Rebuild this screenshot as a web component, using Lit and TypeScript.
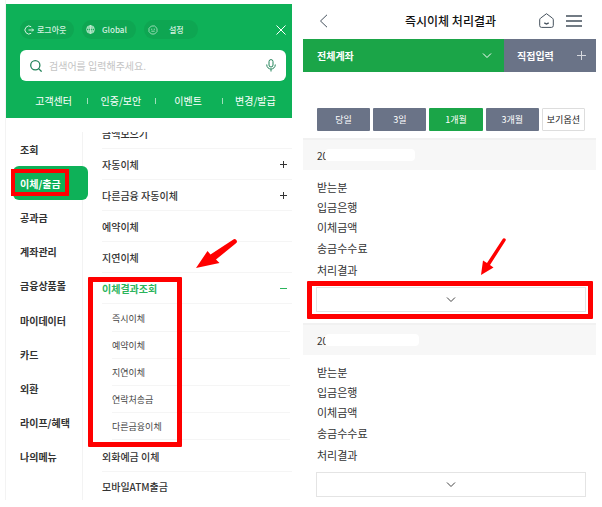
import { LitElement, html, svg, css } from "lit";
import { customElement, state } from "lit/decorators.js";
import { classMap } from "lit/directives/class-map.js";

const reset = css`
  * { box-sizing: border-box; }
  ul { list-style: none; margin: 0; padding: 0; }
  button, input, select { font: inherit; color: inherit; margin: 0; padding: 0; border: 0; background: none; }
  button { cursor: pointer; }
  a { color: inherit; text-decoration: none; }
  svg { display: block; fill: none; flex: none; }
`;

const chevron = svg`<path d="M1 1.5l4 4 4-4" stroke="currentColor"/>`;

@customElement("menu-panel")
class MenuPanel extends LitElement {
  @state() private section = "이체/출금";

  private sections = ["조회", "이체/출금", "공과금", "계좌관리", "금융상품몰", "마이데이터", "카드", "외환", "라이프/혜택", "나의메뉴"];
  private results = ["즉시이체", "예약이체", "지연이체", "연락처송금", "다른금융이체"];

  static styles = [reset, css`
    :host { display: flex; flex-direction: column; padding-top: 4px; position: relative; border-left: 1px solid #f3f3f3; }
    .head { background: #0eb158; color: #fff; height: 114px; padding: 16px 6px 0 14px; }
    .tools { display: flex; align-items: center; gap: 8px; }
    .pill { display: flex; align-items: center; width: 54px; height: 19px; border-radius: 10px; background: #0ea652; font-size: 8px; font-weight: 500; color: #d5f1e0; padding: 0 0 0 4px; gap: 3px; }
    .pill.wide { gap: 7px; }
    .pill.wider { gap: 11px; }
    .close { margin-left: auto; }
    .search { display: flex; align-items: center; height: 31px; margin-top: 11px; padding: 0 10px; gap: 7px; border-radius: 6px; background: #fff; color: #23845a; }
    .search input { flex: 1; min-width: 0; font-size: 10px; outline: 0; color: #333; }
    .search input::placeholder { color: #c4c4c4; opacity: 1; }
    .links { display: grid; grid-template-columns: repeat(4, 1fr); margin: 12px -3px 0 0; }
    .links li { display: flex; align-items: center; justify-content: center; position: relative; font-size: 10px; line-height: 16px; }
    .links li + li::before { content: ""; position: absolute; left: 0; width: 1px; height: 6px; background: #9fe0bb; }
    .body { display: flex; padding-top: 14px; }
    .side { display: flex; flex-direction: column; width: 77px; flex: none; border-right: 1px solid #f3f3f3; padding-bottom: 26px; font-size: 10px; font-weight: 700; color: #333; }
    .side li { flex: 1; display: flex; position: relative; }
    .side a { flex: 1; display: flex; align-items: center; padding-left: 14px; white-space: nowrap; }
    .side .on a { margin: 0 -6px 0 7px; padding-left: 7px; border-radius: 6px; background: #0eb158; color: #fff; }
    .mark { position: absolute; pointer-events: none; border: 5px solid #f00; }
    .side .mark { border-width: 4px; inset: 3px 13px 4px 5px; }
    .list { flex: 1; overflow: hidden; padding-left: 19px; font-size: 10px; font-weight: 500; color: #333; }
    .list > ul { margin-top: -14px; }
    .row { display: flex; align-items: center; justify-content: space-between; height: 31px; padding-right: 5px; border-bottom: 1px solid #f5f5f5; }
    .list > ul > li:last-child .row { height: 28px; border-bottom: 0; }
    .group { position: relative; }
    .group .row { color: #2bb45c; font-weight: 700; }
    .group .mark { inset: 4px 110px -6px -14px; border-radius: 1px; }
    .sub { padding: 1px 2px 1px 10px; font-size: 9px; font-weight: 400; color: #444; }
    .sub a { display: flex; align-items: center; height: 27px; border-bottom: 1px solid #f5f5f5; }
    .arrow { position: absolute; left: 188px; top: 236px; fill: #f00; }
  `];

  private row(name: string, sign = "") {
    return html`<a class="row" href="#">${name}${sign
      ? html`<svg width="7" height="7" stroke="currentColor"><path d=${sign === "+" ? "M0 3.5h7M3.5 0v7" : "M0 3.5h7"}/></svg>`
      : ""}</a>`;
  }

  render() {
    return html`
      <header class="head">
        <div class="tools">
          <button class="pill"><svg width="10" height="10" stroke="currentColor"><path d="M7.2 1.7A4 4 0 1 0 7.2 8.3M4.5 5h5M8 3.5L9.5 5 8 6.5"/></svg>로그아웃</button>
          <button class="pill wide"><svg width="9" height="9" stroke="currentColor" stroke-width=".8"><circle cx="4.5" cy="4.5" r="3.9"/><ellipse cx="4.5" cy="4.5" rx="1.8" ry="3.9"/><path d="M1 3h7M1 6h7M4.5.6v7.8"/></svg>Global</button>
          <button class="pill wider"><svg width="10" height="10" stroke="currentColor" stroke-width=".7"><path d="M3.4 1h3.2L9 3.4v3.2L6.6 9H3.4L1 6.6V3.4Z"/><path d="M3 4.2h1.3M5.7 4.2h1.3M3.3 6.2h3.4"/></svg>설정</button>
          <button class="close" aria-label="닫기"><svg width="10" height="10" stroke="#fff"><path d="M.5.5l9 9M9.5.5l-9 9"/></svg></button>
        </div>
        <div class="search">
          <svg width="12" height="12" stroke="currentColor" stroke-width="1.3"><circle cx="5.3" cy="5.3" r="4.6"/><path d="M8.6 8.6l3 3"/></svg>
          <input type="search" aria-label="검색어" placeholder="검색어를 입력해주세요." />
          <button aria-label="음성 검색"><svg width="10" height="13" stroke="#23845a"><rect x="3" y=".6" width="4" height="7.4" rx="2"/><path d="M.7 5.5c0 6 8.6 6 8.6 0M5 10v2.5"/></svg></button>
        </div>
        <nav><ul class="links">${["고객센터", "인증/보안", "이벤트", "변경/발급"].map(t => html`<li><a href="#">${t}</a></li>`)}</ul></nav>
      </header>
      <div class="body">
        <ul class="side">${this.sections.map(t => html`
          <li class=${classMap({ on: t === this.section })}>
            <a href="#" @click=${() => (this.section = t)}>${t}</a>
            ${t === "이체/출금" ? html`<span class="mark"></span>` : ""}
          </li>`)}
        </ul>
        <div class="list"><ul>
          <li>${this.row("금액모으기")}</li>
          <li>${this.row("자동이체", "+")}</li>
          <li>${this.row("다른금융 자동이체", "+")}</li>
          <li>${this.row("예약이체")}</li>
          <li>${this.row("지연이체")}</li>
          <li class="group">
            ${this.row("이체결과조회", "-")}
            <ul class="sub">${this.results.map(t => html`<li><a href="#">${t}</a></li>`)}</ul>
            <span class="mark"></span>
          </li>
          <li>${this.row("외화예금 이체")}</li>
          <li>${this.row("모바일ATM출금")}</li>
        </ul></div>
      </div>
      <svg class="arrow" width="46" height="34"><path d="M2 32L13.5 15 16.5 18.5 39 3.7A2.3 2.3 0 0 1 42 7.3L22 23.5 25.5 27Z"/></svg>
    `;
  }
}

@customElement("result-panel")
class ResultPanel extends LitElement {
  @state() private period = "1개월";

  static styles = [reset, css`
    :host { display: flex; flex-direction: column; color: #333; }
    .bar { display: grid; grid-template-columns: 1fr auto 1fr; align-items: center; height: 39px; padding: 2px 14px 0 16px; color: #44505c; }
    .bar h1 { margin: 0; font-size: 12px; font-weight: 500; color: #111; }
    .icons { display: flex; align-items: center; justify-content: flex-end; gap: 12px; }
    .account { display: flex; height: 33px; color: #fff; font-size: 10px; font-weight: 700; }
    .pick { flex: 1; display: flex; align-items: center; position: relative; background: #1ba548; }
    .pick select { appearance: none; width: 100%; height: 100%; padding-left: 14px; outline: 0; }
    .pick option { color: #333; }
    .pick svg { position: absolute; right: 12px; pointer-events: none; }
    .direct { display: flex; align-items: center; justify-content: space-between; width: 92px; padding: 0 10px 0 13px; background: #6a7387; }
    .filters { display: grid; grid-template-columns: repeat(4, 53fr) 43fr; gap: 3px; padding: 36px 11px 7px 14px; font-size: 9px; }
    .filters button { height: 23px; border-radius: 1px; background: #6a7387; color: #fff; }
    .filters .on { background: #1ba548; }
    .filters .option { border: 1px solid #ddd; background: #fff; color: #222; }
    .date { display: flex; align-items: center; height: 32px; padding-left: 14px; border-top: 2px solid #f1f1f1; background: #f7f7f7; font-size: 10px; }
    .blank { width: 90px; height: 12px; margin-left: -3px; border-radius: 4px; background: #fff; }
    .blank.long { width: 94px; }
    .fields { padding: 7px 14px 6px; font-size: 11px; line-height: 20px; }
    .fields li:nth-child(n + 4) { line-height: 22px; }
    .foot { position: relative; padding: 0 10px 11px 13px; }
    .more { display: flex; align-items: center; justify-content: center; width: 100%; height: 25px; border: 1px solid #e4e4e4; color: #444; }
    .mark { position: absolute; inset: -6px 3px 4px 4px; border: 5px solid #f00; border-radius: 1px; pointer-events: none; }
    .arrow { position: absolute; right: 88px; top: -50px; fill: #f00; }
  `];

  private item(marked: boolean) {
    return html`<section>
      <div class="date">20<span class=${classMap({ blank: true, long: !marked })}></span></div>
      <ul class="fields">${["받는분", "입금은행", "이체금액", "송금수수료", "처리결과"].map(t => html`<li>${t}</li>`)}</ul>
      <div class="foot">
        <button class="more" aria-label="상세 보기"><svg width="10" height="7">${chevron}</svg></button>
        ${marked ? html`<span class="mark"></span>
          <svg class="arrow" width="28" height="40"><path d="M1 38L3 23.5 7 26 22.7 2A1.6 1.6 0 0 1 25.5 3.7L10 28 13.5 30.5Z"/></svg>` : ""}
      </div>
    </section>`;
  }

  render() {
    return html`
      <header class="bar">
        <button aria-label="뒤로"><svg width="9" height="14" stroke="currentColor"><path d="M8 .8L1.5 7 8 13.2"/></svg></button>
        <h1>즉시이체 처리결과</h1>
        <div class="icons">
          <button aria-label="홈"><svg width="15" height="15" stroke="currentColor"><path d="M7.5 .7L13.5 5.2Q14.3 5.8 14.3 6.8V12.5Q14.3 14.4 12.5 14.4H2.5Q.7 14.4 .7 12.5V6.8Q.7 5.8 1.5 5.2Z"/><path d="M5.3 9.8L7.5 11 9.7 9.8" stroke-width="1.4"/></svg></button>
          <button aria-label="메뉴"><svg width="16" height="12" stroke="currentColor" stroke-width="1.5"><path d="M0 1h16M0 6h16M0 11h16"/></svg></button>
        </div>
      </header>
      <div class="account">
        <label class="pick">
          <select aria-label="계좌 선택"><option>전체계좌</option></select>
          <svg width="10" height="7">${chevron}</svg>
        </label>
        <button class="direct">직접입력<svg width="9" height="9" stroke="#d5d8de"><path d="M0 4.5h9M4.5 0v9"/></svg></button>
      </div>
      <div class="filters">
        ${["당일", "3일", "1개월", "3개월"].map(t => html`<button class=${classMap({ on: t === this.period })} @click=${() => (this.period = t)}>${t}</button>`)}
        <button class="option">보기옵션</button>
      </div>
      ${this.item(true)}${this.item(false)}
    `;
  }
}

@customElement("app-root")
class AppRoot extends LitElement {
  static styles = css`
    :host { display: grid; grid-template-columns: 287fr 293fr; column-gap: 11px; align-items: start; padding: 0 6px 0 5px; background: #fff; font-family: "Noto Sans CJK KR", "Noto Sans", sans-serif; }
  `;

  render() {
    return html`<menu-panel></menu-panel><result-panel></result-panel>`;
  }
}
